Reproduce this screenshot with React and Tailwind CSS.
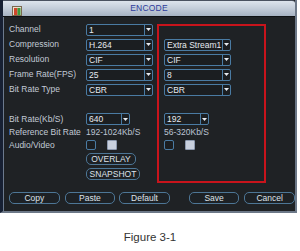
const font = { fontFamily: '"Liberation Sans", Arial, sans-serif' };

function Arrow() {
  return (
    <svg width="5" height="3" viewBox="0 0 5 3">
      <path d="M0 0h5L2.5 3z" fill="#e8ecf2" />
    </svg>
  );
}

function Select({ value, width }) {
  return (
    <div
      className={`flex h-[12px] items-stretch rounded-[2px] border border-[#4a7ba3] bg-[#1b1e21] ${width}`}
    >
      <div className="flex-1 overflow-hidden whitespace-nowrap pl-[2px] text-[8.5px] leading-[10px] text-[#e6eaf0]">
        {value}
      </div>
      <div className="flex w-[8px] items-center justify-center border-l border-[#4a7ba3]">
        <Arrow />
      </div>
    </div>
  );
}

function Check({ on }) {
  return on ? (
    <div className="h-[10px] w-[10px] rounded-[1px] border border-[#8d9ab0] bg-[#c8d0de]" />
  ) : (
    <div className="h-[10px] w-[10px] rounded-[2px] border border-[#4a7ba3] bg-[#1b1e21]" />
  );
}

function Btn({ children, className = "" }) {
  return (
    <div
      className={`flex h-[12px] items-center justify-center rounded-[5px] border border-[#4d7696] bg-[#1d2125] text-[8.5px] leading-none text-[#dde2ea] ${className}`}
    >
      {children}
    </div>
  );
}

function Row({ label, left, right, h = "h-[15px]" }) {
  return (
    <div className={`flex items-center text-[8.5px] leading-none ${h}`}>
      <div className="w-[77px] whitespace-nowrap text-[#c3cad6]">{label}</div>
      <div className="w-[78px]">{left}</div>
      <div>{right}</div>
    </div>
  );
}

export default function App() {
  return (
    <div className="relative h-[251px] w-[300px] overflow-hidden bg-white" style={font}>
      <div className="flex h-[213px] w-[297px] flex-col border-l-[3px] border-r-2 border-b-2 border-l-[#172033] border-r-[#6c7888] border-b-[#6c7888] bg-[#1f2225]">
        {/* title bar */}
        <div className="relative flex h-[16px] items-center justify-center rounded-tr-[3px] border-t border-[#4a5260] bg-gradient-to-b from-[#dde4ec] via-[#c3cdd9] to-[#a6b2c2]">
          <svg className="absolute left-[9px] top-[5px]" width="10" height="10" viewBox="0 0 10 10">
            <rect x="0.5" y="0.5" width="9" height="9" fill="#e8e2d0" stroke="#7a6a50" strokeWidth="1" />
            <rect x="2" y="2" width="3.5" height="7" fill="#d0462a" />
            <rect x="5.5" y="2" width="3" height="7" fill="#3d9a3a" />
          </svg>
          <span className="text-[8.5px] leading-none tracking-[0.2px] text-[#2c3b9c]">ENCODE</span>
        </div>
        <div className="h-[1px] bg-[#0e1114]" />

        {/* body */}
        <div className="relative flex flex-1 flex-col border-l border-[#6c7a8e] pl-[5px] pt-[5px]">
          <Row label="Channel" left={<Select value="1" width="w-[67px]" />} />
          <Row
            label="Compression"
            left={<Select value="H.264" width="w-[67px]" />}
            right={<Select value="Extra Stream1" width="w-[67px]" />}
          />
          <Row
            label="Resolution"
            left={<Select value="CIF" width="w-[67px]" />}
            right={<Select value="CIF" width="w-[67px]" />}
          />
          <Row
            label="Frame Rate(FPS)"
            left={<Select value="25" width="w-[67px]" />}
            right={<Select value="8" width="w-[67px]" />}
          />
          <Row
            label="Bit Rate Type"
            left={<Select value="CBR" width="w-[67px]" />}
            right={<Select value="CBR" width="w-[67px]" />}
          />
          <div className="h-[15px]" />
          <Row
            h="h-[14px]"
            label="Bit Rate(Kb/S)"
            left={<Select value="640" width="w-[44px]" />}
            right={<Select value="192" width="w-[45px]" />}
          />
          <Row
            h="h-[13px]"
            label="Reference Bit Rate"
            left={<div className="text-[#bcc5d4]">192-1024Kb/S</div>}
            right={<div className="text-[#bcc5d4]">56-320Kb/S</div>}
          />
          <Row
            h="h-[12px]"
            label="Audio/Video"
            left={
              <div className="flex gap-[11px]">
                <Check />
                <Check on />
              </div>
            }
            right={
              <div className="flex gap-[11px]">
                <Check />
                <Check on />
              </div>
            }
          />
          <div className="mt-[2px] pl-[77px]">
            <Btn className="w-[50px]">OVERLAY</Btn>
          </div>
          <div className="mt-[3px] pl-[77px]">
            <Btn className="w-[54px]">SNAPSHOT</Btn>
          </div>
          <div className="mt-[12px] flex">
            <Btn className="w-[51px]">Copy</Btn>
            <Btn className="ml-[5px] w-[51px]">Paste</Btn>
            <Btn className="ml-[4px] w-[51px]">Default</Btn>
            <Btn className="ml-[19px] w-[51px]">Save</Btn>
            <Btn className="ml-[5px] w-[51px]">Cancel</Btn>
          </div>

          {/* red highlight annotation */}
          <div className="absolute left-[153px] top-[7px] h-[159px] w-[109px] border-2 border-[#c8141c]" />
        </div>
      </div>
      <div className="mt-[19px] text-center text-[11.5px] leading-none text-[#333]">Figure 3-1</div>
    </div>
  );
}
